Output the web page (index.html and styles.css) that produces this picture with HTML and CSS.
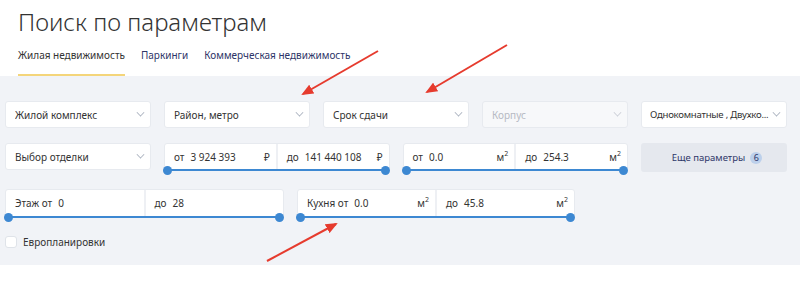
FILE: index.html
```html
<!DOCTYPE html>
<html lang="ru">
<head>
<meta charset="utf-8">
<title>Поиск по параметрам</title>
<link rel="stylesheet" href="styles.css">
</head>
<body>
<div class="page">
  <header class="head">
    <h1 class="title">Поиск по параметрам</h1>
    <nav class="tabs">
      <a class="tab tab-active">Жилая недвижимость</a>
      <a class="tab">Паркинги</a>
      <a class="tab">Коммерческая недвижимость</a>
    </nav>
  </header>
  <section class="panel">
    <div class="row row-five">
      <div class="field select"><span>Жилой комплекс</span><i class="chev"></i></div>
      <div class="field select"><span>Район, метро</span><i class="chev"></i></div>
      <div class="field select"><span>Срок сдачи</span><i class="chev"></i></div>
      <div class="field select disabled"><span>Корпус</span><i class="chev"></i></div>
      <div class="field select tight"><span>Однокомнатные , Двухко...</span><i class="chev"></i></div>
    </div>
    <div class="row row-second">
      <div class="field select"><span>Выбор отделки</span><i class="chev"></i></div>
      <div class="range">
        <div class="half"><span class="lbl">от</span><span class="val">3 924 393</span><span class="unit">₽</span></div>
        <div class="half"><span class="lbl">до</span><span class="val">141 440 108</span><span class="unit">₽</span></div>
        <i class="track"></i><i class="dot dot-l"></i><i class="dot dot-r"></i>
      </div>
      <div class="range">
        <div class="half"><span class="lbl">от</span><span class="val">0.0</span><span class="unit">м<sup>2</sup></span></div>
        <div class="half"><span class="lbl">до</span><span class="val">254.3</span><span class="unit">м<sup>2</sup></span></div>
        <i class="track"></i><i class="dot dot-l"></i><i class="dot dot-r"></i>
      </div>
      <button class="more">Еще параметры <span class="badge">6</span></button>
    </div>
    <div class="row row-third">
      <div class="range range-floor">
        <div class="half"><span class="lbl">Этаж от</span><span class="val">0</span></div>
        <div class="half"><span class="lbl">до</span><span class="val">28</span></div>
        <i class="track"></i><i class="dot dot-l"></i><i class="dot dot-r"></i>
      </div>
      <div class="range range-kitchen">
        <div class="half"><span class="lbl">Кухня от</span><span class="val">0.0</span><span class="unit">м<sup>2</sup></span></div>
        <div class="half"><span class="lbl">до</span><span class="val">45.8</span><span class="unit">м<sup>2</sup></span></div>
        <i class="track"></i><i class="dot dot-l"></i><i class="dot dot-r"></i>
      </div>
    </div>
    <label class="check"><i class="box"></i><span>Европланировки</span></label>
  </section>
  <svg class="arrows" width="800" height="281" viewBox="0 0 800 281">
    <defs>
      <marker id="ah" markerWidth="6" markerHeight="5" refX="5" refY="2.5" orient="auto" markerUnits="strokeWidth">
        <path d="M0 0 L6 2.5 L0 5 Z" fill="#e63b2e"/>
      </marker>
    </defs>
    <line x1="378" y1="51" x2="303" y2="94" stroke="#e63b2e" stroke-width="2" marker-end="url(#ah)"/>
    <line x1="507" y1="45" x2="427" y2="92" stroke="#e63b2e" stroke-width="2" marker-end="url(#ah)"/>
    <line x1="267" y1="261" x2="336" y2="224" stroke="#e63b2e" stroke-width="2" marker-end="url(#ah)"/>
  </svg>
</div>
</body>
</html>
```
FILE: styles.css
```css
* { box-sizing: border-box; }
html, body { margin: 0; padding: 0; background: #fff; }
body { font-family: "Noto Sans", "Liberation Sans", sans-serif; color: #333; }
.page { position: relative; width: 800px; height: 281px; overflow: hidden; }

.head { padding: 0 18px; }
.title { margin: 0; padding-top: 7px; font-size: 24px; line-height: 30px; font-weight: 300; color: #333; }
.tabs { display: flex; gap: 16px; margin-top: 10px; }
.tab { font-size: 10px; line-height: 14px; padding: 1px 0 12px; color: #2e3568; border-bottom: 2px solid transparent; }
.tab-active { color: #333; border-bottom-color: #f4d57a; }

.panel { background: #f1f3f7; padding: 25px 13px 0 5px; height: 189px; }
.row { display: flex; gap: 13px; }
.row-second { margin-top: 15px; }
.row-third { margin-top: 17px; }

.field { height: 27px; background: #fff; border: 1px solid #e7eaef; border-radius: 3px; font-size: 10px; display: flex; align-items: center; padding: 0 6px 0 9px; min-width: 0; }
.row-five .field { width: 146px; flex: none; }
.row-second > .field { width: 146px; flex: none; }
.field span { flex: 1; white-space: nowrap; overflow: hidden; }
.field.tight { padding-left: 8px; }
.field.tight span { font-size: 9.6px; letter-spacing: -0.25px; }
.select.disabled { background: #f7f8fa; color: #b6bac3; }
.chev { width: 7px; height: 7px; border-right: 1px solid #a3abba; border-bottom: 1px solid #a3abba; transform: rotate(45deg) scale(0.8, 0.8); margin-top: -4px; flex: none; }
.disabled .chev { border-color: #c8ccd4; }

.range { position: relative; flex: 1 1 0; min-width: 0; height: 27px; display: flex; background: #fff; border: 1px solid #e7eaef; border-radius: 3px; font-size: 10px; }
.range-floor { flex: none; width: 279px; height: 28px; }
.range-kitchen { flex: none; width: 278px; height: 28px; }
.half { flex: 1 1 0; display: flex; align-items: center; padding: 0 6px 0 9px; white-space: nowrap; }
.half + .half { border-left: 2px solid #eef0f4; }
.lbl { margin-right: 6px; }
.val { flex: 1; }
.unit { font-size: 10px; }
.unit sup { font-size: 7px; vertical-align: 5px; line-height: 0; }
.track { position: absolute; left: 2px; right: 3px; bottom: -2px; height: 2px; background: #3d88d2; }
.dot { position: absolute; width: 9px; height: 9px; border-radius: 50%; background: #3d88d2; bottom: -6px; }
.dot-l { left: -2px; }
.dot-r { right: -1px; }

.more { width: 146px; height: 29px; flex: none; border: 0; border-radius: 3px; background: #e5e8ee; font-family: inherit; font-size: 9.5px; color: #2f3769; display: flex; align-items: center; justify-content: center; gap: 5px; padding: 0 0 0 6px; }
.badge { width: 12px; height: 12px; border-radius: 50%; background: #bcd0eb; color: #2f3769; font-size: 9px; line-height: 12px; text-align: center; }

.check { display: flex; align-items: center; gap: 6px; margin-top: 18px; font-size: 10px; color: #333; }
.box { width: 12px; height: 12px; background: #fff; border: 1px solid #dfe3e9; border-radius: 3px; }

.arrows { position: absolute; left: 0; top: 0; pointer-events: none; }
```
